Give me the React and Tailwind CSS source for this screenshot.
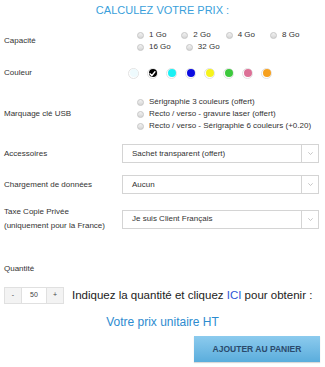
import React from "react";

function Radio() {
  return (
    <span className="inline-block w-[7px] h-[7px] rounded-full border border-[#c6c6c6] bg-gradient-to-b from-[#f2f2f2] to-[#d6d6d6] shrink-0" />
  );
}

function RadioItem({ label, className = "" }) {
  return (
    <div className={"flex items-center h-[12px] " + className}>
      <Radio />
      <span className="ml-[5px] text-[8px] leading-[12px] text-[#333]">{label}</span>
    </div>
  );
}

function Swatch({ color, check }) {
  return (
    <span className="w-[11px] h-[11px] rounded-full border-[1.5px] border-[#e2e2e2] flex items-center justify-center shrink-0">
      <span
        className="w-[8px] h-[8px] rounded-full flex items-center justify-center"
        style={{ backgroundColor: color }}
      >
        {check && (
          <svg width="7" height="7" viewBox="0 0 10 10">
            <path d="M1.5 5.5 L4 8 L8.5 2.5" stroke="#fff" strokeWidth="2" fill="none" strokeLinecap="round" />
          </svg>
        )}
      </span>
    </span>
  );
}

function Select({ value }) {
  return (
    <div className="w-[197px] h-[19px] border border-[#d4d4d4] bg-white flex items-stretch">
      <div className="flex-1 pl-[9px] flex items-center text-[8px] text-[#333]">{value}</div>
      <div className="w-[17px] border-l border-[#d4d4d4] flex items-center justify-center">
        <svg width="5" height="3" viewBox="0 0 5 3">
          <path d="M0.3 0.3 L2.5 2.5 L4.7 0.3" stroke="#b0b0b0" strokeWidth="0.7" fill="none" />
        </svg>
      </div>
    </div>
  );
}

export default function App() {
  return (
    <div className="w-[325px] h-[367px] bg-white overflow-hidden font-['Liberation_Sans',Arial,sans-serif] text-[#333]">
      <div className="pt-[3px] h-[17px] leading-[14px] text-center text-[11px] text-[#3a9fdb]">
        CALCULEZ VOTRE PRIX :
      </div>

      {/* Capacité */}
      <div className="mt-[12px] flex items-center">
        <div className="w-[137px] pl-[4px] text-[8px]">Capacité</div>
        <div className="flex flex-col">
          <div className="flex">
            <RadioItem label="1 Go" className="mr-[15px]" />
            <RadioItem label="2 Go" className="mr-[15px]" />
            <RadioItem label="4 Go" className="mr-[15px]" />
            <RadioItem label="8 Go" />
          </div>
          <div className="flex">
            <RadioItem label="16 Go" className="mr-[15px]" />
            <RadioItem label="32 Go" />
          </div>
        </div>
      </div>

      {/* Couleur */}
      <div className="mt-[14px] flex items-center h-[12px]">
        <div className="w-[128px] pl-[4px] text-[8px]">Couleur</div>
        <div className="flex gap-[8px]">
          <Swatch color="#eefafd" />
          <Swatch color="#000000" check />
          <Swatch color="#1af0f4" />
          <Swatch color="#0c0ce0" />
          <Swatch color="#f6f31c" />
          <Swatch color="#3cc83c" />
          <Swatch color="#dc7096" />
          <Swatch color="#f6a01e" />
        </div>
      </div>

      {/* Marquage */}
      <div className="mt-[17px] flex items-center">
        <div className="w-[137px] pl-[4px] text-[8px]">Marquage clé USB</div>
        <div className="flex flex-col">
          <RadioItem label="Sérigraphie 3 couleurs (offert)" />
          <RadioItem label="Recto / verso - gravure laser (offert)" />
          <RadioItem label="Recto / verso - Sérigraphie 6 couleurs (+0.20)" />
        </div>
      </div>

      {/* Accessoires */}
      <div className="mt-[12px] flex items-center">
        <div className="w-[122px] pl-[4px] text-[8px]">Accessoires</div>
        <Select value="Sachet transparent (offert)" />
      </div>

      <div className="mt-[12px] flex items-center">
        <div className="w-[122px] pl-[4px] text-[8px]">Chargement de données</div>
        <Select value="Aucun" />
      </div>

      <div className="mt-[11px] flex items-center">
        <div className="w-[122px] pl-[4px] text-[8px] leading-[14px]">
          Taxe Copie Privée
          <br />
          (uniquement pour la France)
        </div>
        <Select value="Je suis Client Français" />
      </div>

      <div className="mt-[30px] pl-[4px] h-[12px] leading-[12px] text-[8px]">Quantité</div>

      <div className="mt-[12px] flex items-center pl-[4px]">
        <div className="flex h-[17px] border border-[#e0e0e0] text-[7px] text-[#444]">
          <div className="w-[16px] bg-[#f3f3f3] flex items-center justify-center">-</div>
          <div className="w-[26px] bg-white border-x border-[#e0e0e0] flex items-center justify-center">50</div>
          <div className="w-[16px] bg-[#f3f3f3] flex items-center justify-center">+</div>
        </div>
        <div className="ml-[8px] text-[11.5px] text-[#222] whitespace-nowrap">
          Indiquez la quantité et cliquez <span className="text-[#2f55d6]">ICI</span> pour obtenir :
        </div>
      </div>

      <div className="mt-[10px] h-[16px] leading-[16px] text-center text-[12px] text-[#2d8bcf]">
        Votre prix unitaire HT
      </div>

      <div className="mt-[6px] flex justify-end pr-[5px]">
        <div className="w-[126px] h-[26px] bg-gradient-to-b from-[#8ccbee] to-[#5aaddc] flex items-center justify-center text-[8.5px] font-bold text-[#2a4a6c] shadow-[0_1px_1px_rgba(0,0,0,0.15)]">
          AJOUTER AU PANIER
        </div>
      </div>
    </div>
  );
}
